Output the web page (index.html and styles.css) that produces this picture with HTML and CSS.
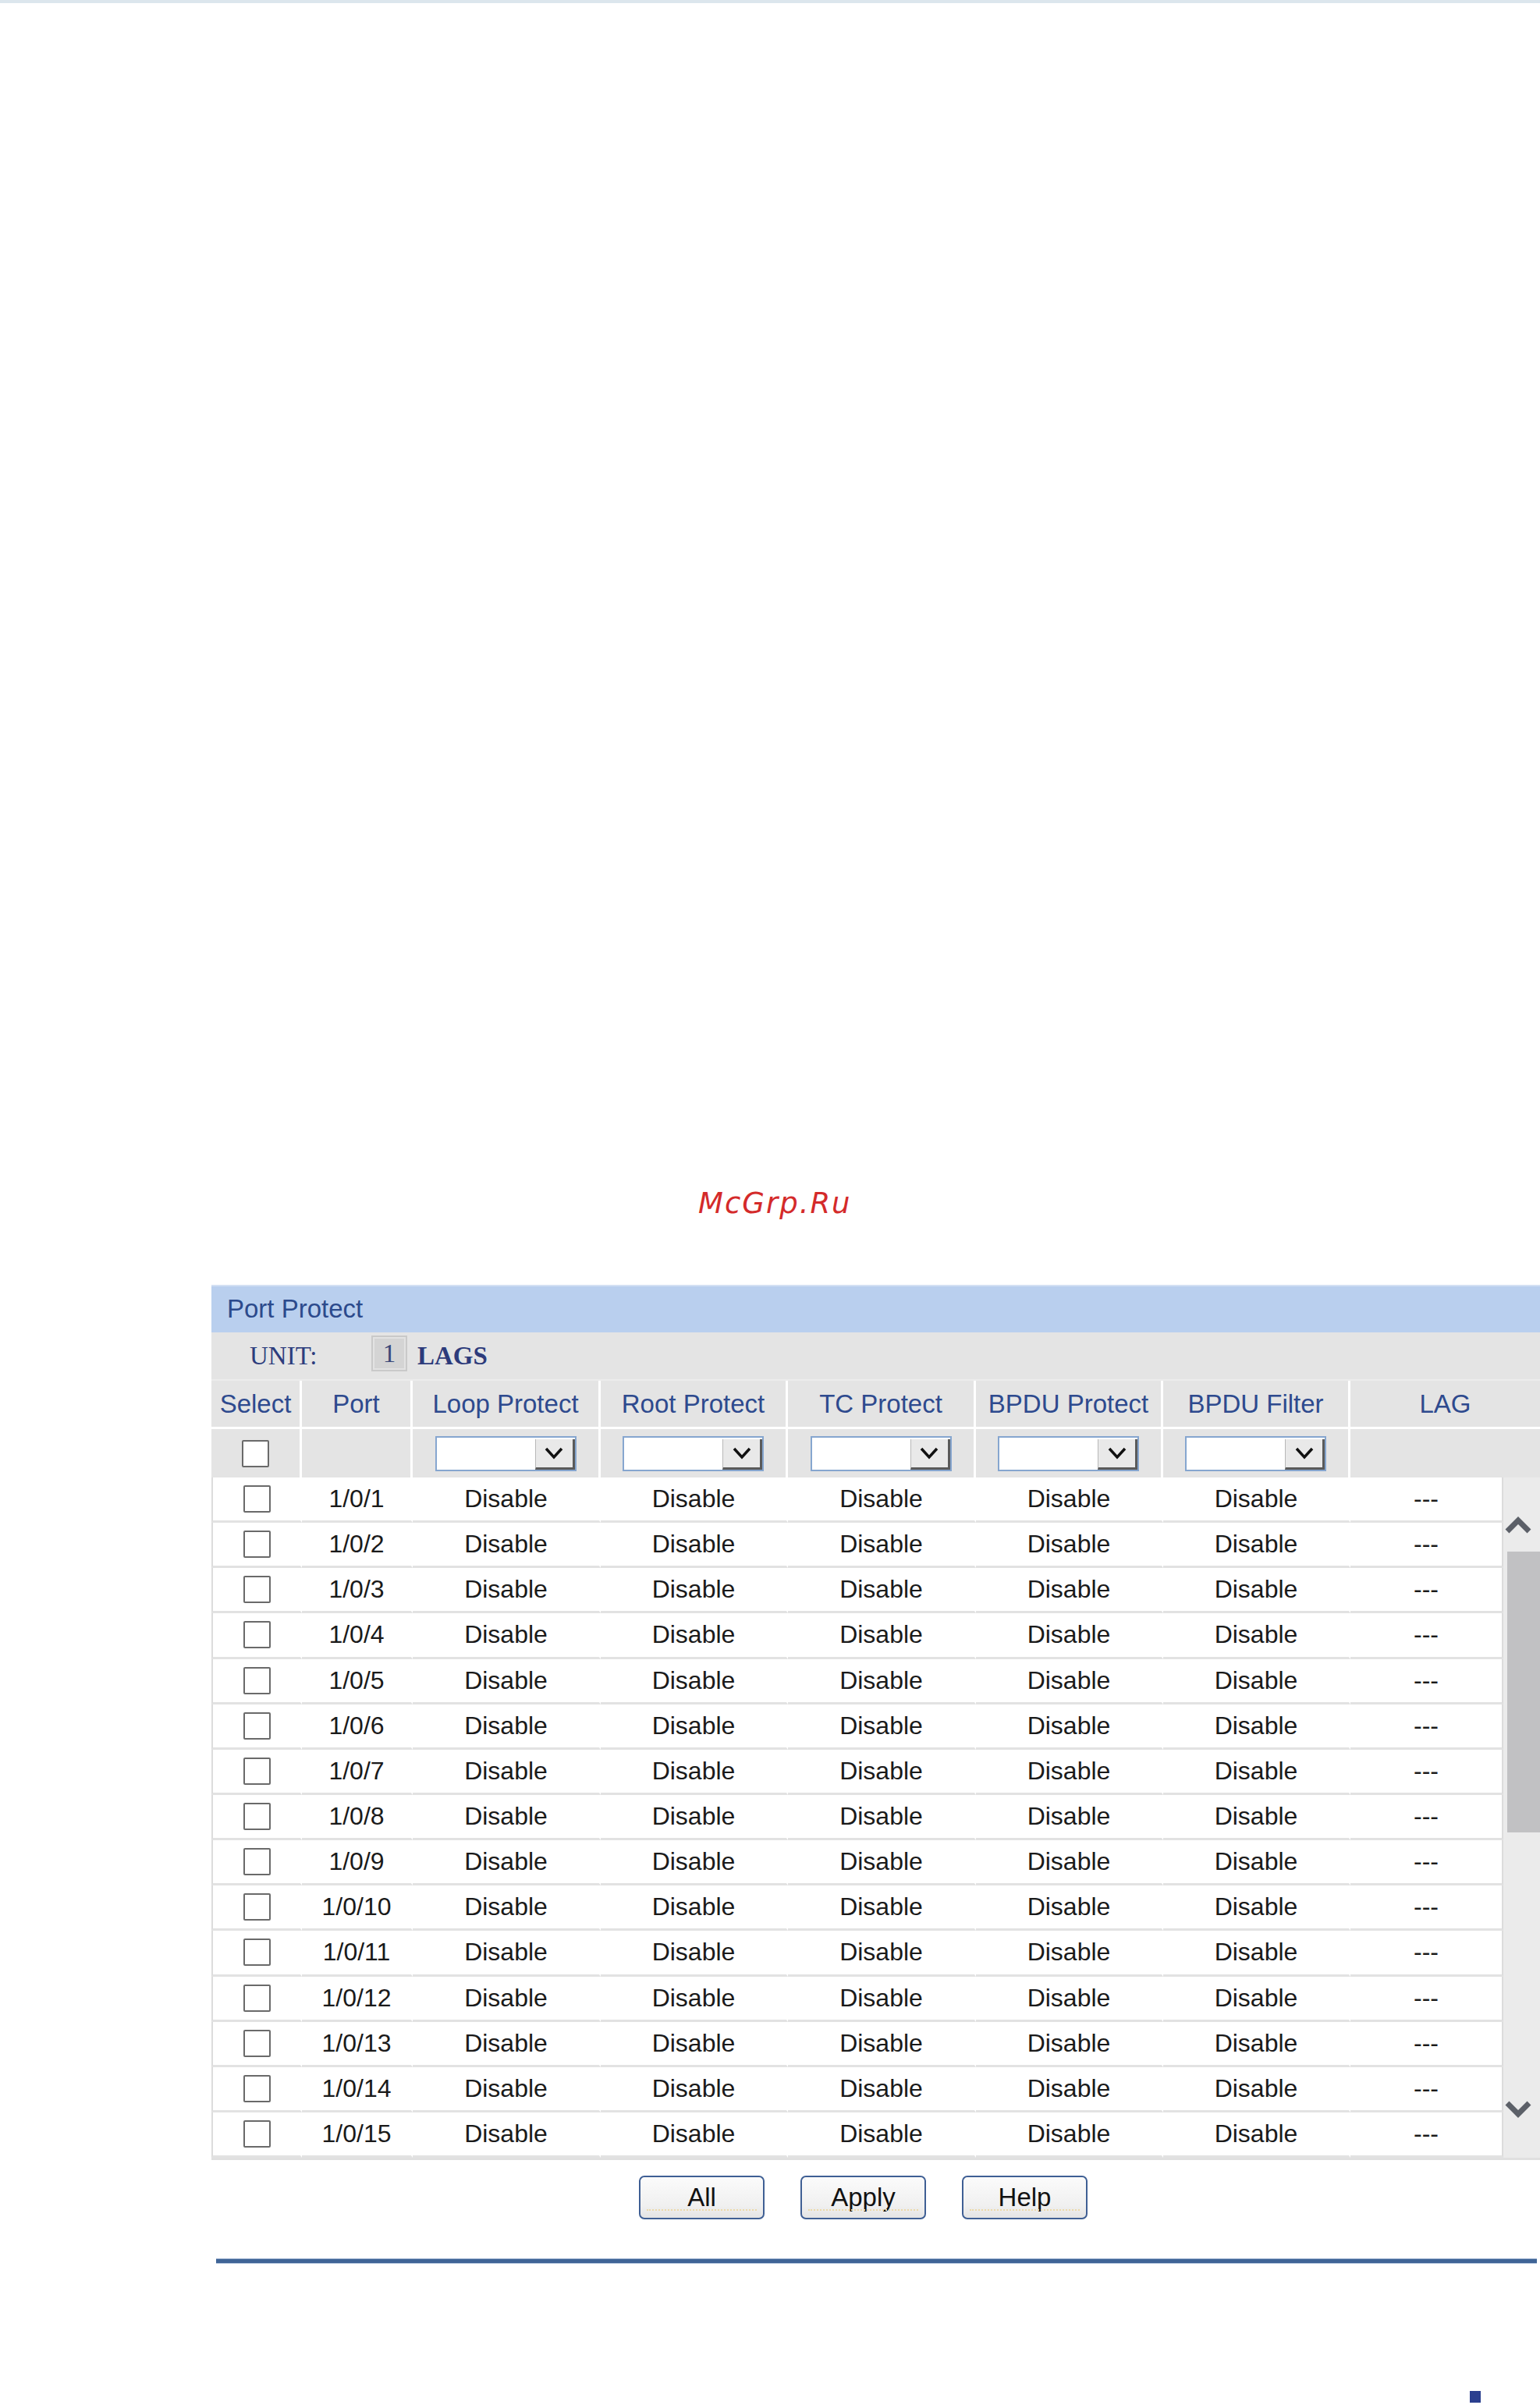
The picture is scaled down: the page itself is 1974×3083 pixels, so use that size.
FILE: index.html
```html
<!DOCTYPE html>
<html>
<head>
<meta charset="utf-8">
<title>Port Protect</title>
<link rel="stylesheet" href="styles.css">
</head>
<body>
<div class="topbar"></div>
<div class="watermark">McGrp.Ru</div>

<div class="panel">
  <div class="title">Port Protect</div>
  <div class="unit">
    <span class="unit-label">UNIT:</span>
    <span class="unit-box">1</span>
    <span class="lags">LAGS</span>
  </div>
  <div class="hdr">
    <div>Select</div><div>Port</div><div>Loop Protect</div><div>Root Protect</div><div>TC Protect</div><div>BPDU Protect</div><div>BPDU Filter</div><div class="last">LAG</div>
  </div>
  <div class="flt">
    <div><span class="cb"></span></div>
    <div></div>
    <div><span class="sel"><span class="sel-btn"><svg width="24" height="16" viewBox="0 0 24 16"><path d="M2 2 L12 13 L22 2" fill="none" stroke="#111" stroke-width="3.5"/></svg></span></span></div>
    <div><span class="sel"><span class="sel-btn"><svg width="24" height="16" viewBox="0 0 24 16"><path d="M2 2 L12 13 L22 2" fill="none" stroke="#111" stroke-width="3.5"/></svg></span></span></div>
    <div><span class="sel"><span class="sel-btn"><svg width="24" height="16" viewBox="0 0 24 16"><path d="M2 2 L12 13 L22 2" fill="none" stroke="#111" stroke-width="3.5"/></svg></span></span></div>
    <div><span class="sel"><span class="sel-btn"><svg width="24" height="16" viewBox="0 0 24 16"><path d="M2 2 L12 13 L22 2" fill="none" stroke="#111" stroke-width="3.5"/></svg></span></span></div>
    <div><span class="sel"><span class="sel-btn"><svg width="24" height="16" viewBox="0 0 24 16"><path d="M2 2 L12 13 L22 2" fill="none" stroke="#111" stroke-width="3.5"/></svg></span></span></div>
    <div class="last"></div>
  </div>
  <div class="body">
    <div class="rows">
      <div class="row"><div><span class="cb"></span></div><div>1/0/1</div><div>Disable</div><div>Disable</div><div>Disable</div><div>Disable</div><div>Disable</div><div>---</div></div>
      <div class="row"><div><span class="cb"></span></div><div>1/0/2</div><div>Disable</div><div>Disable</div><div>Disable</div><div>Disable</div><div>Disable</div><div>---</div></div>
      <div class="row"><div><span class="cb"></span></div><div>1/0/3</div><div>Disable</div><div>Disable</div><div>Disable</div><div>Disable</div><div>Disable</div><div>---</div></div>
      <div class="row"><div><span class="cb"></span></div><div>1/0/4</div><div>Disable</div><div>Disable</div><div>Disable</div><div>Disable</div><div>Disable</div><div>---</div></div>
      <div class="row"><div><span class="cb"></span></div><div>1/0/5</div><div>Disable</div><div>Disable</div><div>Disable</div><div>Disable</div><div>Disable</div><div>---</div></div>
      <div class="row"><div><span class="cb"></span></div><div>1/0/6</div><div>Disable</div><div>Disable</div><div>Disable</div><div>Disable</div><div>Disable</div><div>---</div></div>
      <div class="row"><div><span class="cb"></span></div><div>1/0/7</div><div>Disable</div><div>Disable</div><div>Disable</div><div>Disable</div><div>Disable</div><div>---</div></div>
      <div class="row"><div><span class="cb"></span></div><div>1/0/8</div><div>Disable</div><div>Disable</div><div>Disable</div><div>Disable</div><div>Disable</div><div>---</div></div>
      <div class="row"><div><span class="cb"></span></div><div>1/0/9</div><div>Disable</div><div>Disable</div><div>Disable</div><div>Disable</div><div>Disable</div><div>---</div></div>
      <div class="row"><div><span class="cb"></span></div><div>1/0/10</div><div>Disable</div><div>Disable</div><div>Disable</div><div>Disable</div><div>Disable</div><div>---</div></div>
      <div class="row"><div><span class="cb"></span></div><div>1/0/11</div><div>Disable</div><div>Disable</div><div>Disable</div><div>Disable</div><div>Disable</div><div>---</div></div>
      <div class="row"><div><span class="cb"></span></div><div>1/0/12</div><div>Disable</div><div>Disable</div><div>Disable</div><div>Disable</div><div>Disable</div><div>---</div></div>
      <div class="row"><div><span class="cb"></span></div><div>1/0/13</div><div>Disable</div><div>Disable</div><div>Disable</div><div>Disable</div><div>Disable</div><div>---</div></div>
      <div class="row"><div><span class="cb"></span></div><div>1/0/14</div><div>Disable</div><div>Disable</div><div>Disable</div><div>Disable</div><div>Disable</div><div>---</div></div>
      <div class="row"><div><span class="cb"></span></div><div>1/0/15</div><div>Disable</div><div>Disable</div><div>Disable</div><div>Disable</div><div>Disable</div><div>---</div></div>
    </div>
    <div class="scroll">
      <div class="arrow-up"><svg width="34" height="26" viewBox="0 0 34 26"><path d="M3 22 L17 8 L31 22" fill="none" stroke="#5c6068" stroke-width="7"/></svg></div>
      <div class="thumb"></div>
      <div class="arrow-down"><svg width="34" height="26" viewBox="0 0 34 26"><path d="M3 4 L17 18 L31 4" fill="none" stroke="#5c6068" stroke-width="7"/></svg></div>
    </div>
  </div>
  <div class="actions">
    <button class="btn">All</button>
    <button class="btn">Apply</button>
    <button class="btn">Help</button>
  </div>
</div>

<div class="rule"></div>
<div class="mark"></div>
</body>
</html>
```

FILE: styles.css
```css
html, body {
  margin: 0;
  padding: 0;
  background: #ffffff;
}
body {
  width: 1974px;
  overflow-x: hidden;
  font-family: "Liberation Sans", Arial, sans-serif;
}
.topbar {
  height: 4px;
  background: #dce6ed;
}
.watermark {
  margin-top: 1517px;
  height: 43px;
  line-height: 43px;
  padding-left: 895px;
  font-family: "DejaVu Sans", sans-serif;
  font-style: italic;
  font-size: 37px;
  letter-spacing: 2px;
  color: #d42a2a;
}
.panel {
  margin-top: 83px;
  margin-left: 271px;
  width: 1703px;
}
.title {
  height: 61px;
  box-sizing: border-box;
  border-top: 2px solid #d3e0f3;
  background: #b9cfee;
  color: #2c4a8c;
  font-size: 33px;
  line-height: 58px;
  padding-left: 20px;
}
.unit {
  height: 62px;
  box-sizing: border-box;
  background: #e4e4e4;
  border-bottom: 2px solid #ececec;
  display: flex;
  align-items: center;
  padding-left: 49px;
  font-family: "Liberation Serif", "Times New Roman", serif;
  font-size: 33px;
}
.unit-label {
  width: 156px;
  color: #2d3d7d;
}
.unit-box {
  width: 46px;
  height: 46px;
  box-sizing: border-box;
  border: 2px solid #c9c9c9;
  box-shadow: inset 0 0 0 2px #e2e2e2;
  background: #d4d4d4;
  color: #3a4878;
  display: flex;
  align-items: center;
  justify-content: center;
  margin-top: -6px;
}
.lags {
  margin-left: 13px;
  font-weight: bold;
  color: #2d3b7b;
}
.hdr, .flt {
  display: grid;
  grid-template-columns: 116px 142px 241px 240px 241px 240px 240px 243px;
  background: #e4e4e4;
  box-sizing: border-box;
}
.hdr {
  height: 62px;
  border-bottom: 3px solid #ffffff;
}
.flt {
  height: 62px;
}
.hdr > div, .flt > div {
  border-right: 3px solid #ffffff;
  display: flex;
  align-items: center;
  justify-content: center;
}
.hdr > div.last, .flt > div.last {
  border-right: none;
}
.hdr > div {
  color: #2e4a8e;
  font-size: 33px;
}
.cb {
  display: block;
  width: 35px;
  height: 35px;
  box-sizing: border-box;
  border: 2px solid #6a6a6a;
  border-radius: 2px;
  background: #ffffff;
}
.sel {
  display: flex;
  justify-content: flex-end;
  width: 181px;
  height: 45px;
  box-sizing: border-box;
  border: 2px solid #86a6cf;
  background: #ffffff;
  padding: 2px 0 0 0;
}
.sel-btn {
  width: 51px;
  height: 100%;
  box-sizing: border-box;
  background: #e9e9e9;
  border-left: 1px solid #b8b8b8;
  border-right: 3px solid #5a5a5a;
  border-bottom: 3px solid #5a5a5a;
  display: flex;
  align-items: center;
  justify-content: center;
}
.body {
  display: flex;
}
.rows {
  width: 1656px;
}
.row {
  display: grid;
  grid-template-columns: 116px 142px 241px 240px 241px 240px 240px 196px;
  height: 58.15px;
}
.row > div {
  box-sizing: border-box;
  border-bottom: 3px solid #e2e2e2;
  border-right: 2px solid #ffffff;
  display: flex;
  align-items: center;
  justify-content: center;
  font-size: 32px;
  color: #1a1a1a;
  background: #ffffff;
}
.row > div:first-child {
  border-left: 2px solid #dcdcdc;
}
.row > div:last-child {
  border-right: 2px solid #dcdcdc;
}
.scroll {
  width: 47px;
  height: 872px;
  background: #ebebeb;
  display: flex;
  flex-direction: column;
}
.arrow-up {
  height: 95px;
  box-sizing: border-box;
  padding: 47px 0 0 2px;
}
.arrow-up svg, .arrow-down svg {
  display: block;
}
.thumb {
  height: 360px;
  margin-left: 5px;
  background: #c1c1c3;
}
.arrow-down {
  margin-top: auto;
  height: 74px;
  box-sizing: border-box;
  padding: 0 0 0 2px;
}
.actions {
  border-top: 3px solid #e0e0e0;
  padding-top: 20px;
  padding-right: 32px;
  display: flex;
  justify-content: center;
  gap: 46px;
}
.btn {
  width: 161px;
  height: 56px;
  box-sizing: border-box;
  margin: 0;
  padding: 0;
  border: 2px solid #3f5f94;
  border-radius: 7px;
  background: linear-gradient(#fbfbfb, #f0f0f0 70%, #e4e4e4);
  font-family: "Liberation Sans", Arial, sans-serif;
  font-size: 33px;
  color: #111111;
  position: relative;
}
.btn::after {
  content: "";
  position: absolute;
  left: 8px;
  right: 8px;
  bottom: 9px;
  border-bottom: 2px dotted #ecd9a8;
}
.rule {
  margin-top: 50px;
  margin-left: 277px;
  width: 1693px;
  height: 7px;
  box-sizing: border-box;
  background: #3f6496;
  border-top: 1px solid #9fb4d2;
  border-bottom: 1px solid #b6c7df;
}
.mark {
  margin-top: 163px;
  margin-left: 1884px;
  width: 14px;
  height: 15px;
  background: #2b3f8f;
}
```
